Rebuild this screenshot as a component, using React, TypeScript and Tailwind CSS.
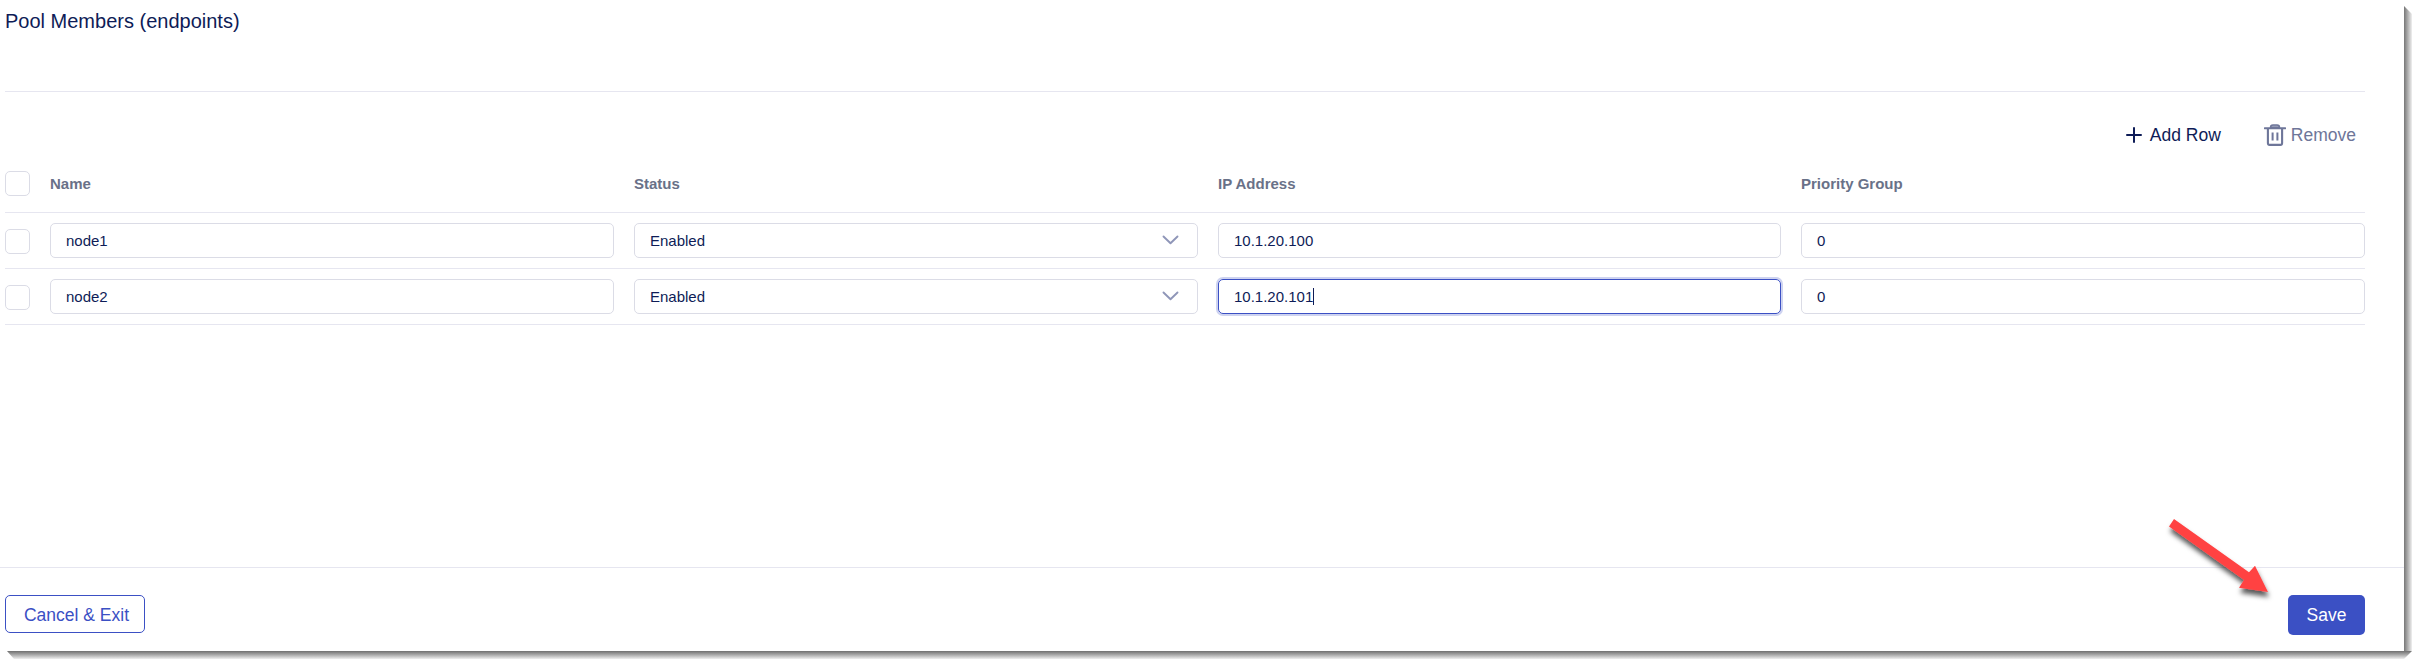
import React from "react";

type Member = { name: string; status: string; ip: string; priority: string; focused?: boolean };

const members: Member[] = [
  { name: "node1", status: "Enabled", ip: "10.1.20.100", priority: "0" },
  { name: "node2", status: "Enabled", ip: "10.1.20.101", priority: "0", focused: true },
];

const columns = ["Name", "Status", "IP Address", "Priority Group"];

function Checkbox() {
  return <span className="block size-[25px] rounded-[5px] border border-[#dbdce6] bg-white" />;
}

function Field({ value, select, focused }: { value: string; select?: boolean; focused?: boolean }) {
  return (
    <div
      className={
        focused
          ? "flex h-[35px] items-center rounded-[5px] border border-[#3b50c4] pl-[15px] shadow-[0_0_0_2px_#ced3f0]"
          : "flex h-[35px] items-center rounded-[5px] border border-[#dbdce6] pl-[15px] pr-[18px]"
      }
    >
      <span className="leading-5">{value}</span>
      {focused && <span className="h-[17px] w-px bg-[#0e1c57]" />}
      {select && (
        <svg className="ml-auto" width="17" height="11" viewBox="0 0 17 11" fill="none">
          <path d="M1.5 1.5L8.5 8.3L15.5 1.5" stroke="#8f96b8" strokeWidth="1.9" strokeLinecap="round" strokeLinejoin="round" />
        </svg>
      )}
    </div>
  );
}

function Arrow() {
  return (
    <svg className="absolute left-[2150px] top-[505px]" width="140" height="110" viewBox="2150 505 140 110">
      <defs>
        <filter id="arrow-shadow" x="-20%" y="-20%" width="150%" height="150%">
          <feDropShadow dx="1" dy="5" stdDeviation="2.5" floodColor="#000" floodOpacity="0.65" />
        </filter>
      </defs>
      <path
        d="M2174 519L2249 572.3L2255 565.7L2268 592L2239 587.7L2244 580L2169 526.5Z"
        fill="#ff4343"
        filter="url(#arrow-shadow)"
      />
    </svg>
  );
}

export default function App() {
  return (
    <div className="relative h-[666px] w-[2419px] overflow-hidden bg-white font-['Liberation_Sans',Arial,sans-serif] text-[#0e1c57]">
      <div className="absolute left-[2404px] top-[6px] h-[653px] w-2 bg-linear-to-r from-[#777777] to-[#f0f0f0] [clip-path:polygon(0_0,100%_8px,100%_645px,0_645px)]" />
      <div className="absolute left-[7px] top-[651px] h-2 w-[2405px] bg-linear-to-b from-[#707070] to-[#f0f0f0] [clip-path:polygon(0_0,2405px_0,2397px_100%,7px_100%)]" />

      <div className="flex h-[651px] w-[2404px] flex-col bg-white">
        <main className="flex flex-1 flex-col pl-[5px] pr-[39px]">
          <header className="h-[92px] border-b border-[#e6e6f0] pt-[9px]">
            <h1 className="text-[20px] leading-6">Pool Members (endpoints)</h1>
          </header>

          <div className="flex h-[63px] items-start justify-end pr-[9px] pt-[32px] text-[17.5px] leading-[22px]">
            <button className="flex items-center gap-2">
              <svg width="16" height="16" viewBox="0 0 16 16" fill="none">
                <path d="M8 1V15M1 8H15" stroke="#0e1c57" strokeWidth="2" strokeLinecap="round" />
              </svg>
              Add Row
            </button>
            <button className="ml-[43px] flex items-center gap-[5px] text-[#6e7699]">
              <svg width="22" height="22" viewBox="0 0 22 22" fill="none" stroke="#6e7699">
                <path d="M6.5 3.5C6.5 1.9 7.6 1 9 1H13C14.4 1 15.5 1.9 15.5 3.5Z" fill="#a3a8c0" strokeWidth="1.5" />
                <path d="M0.8 4.2H21.2" strokeWidth="2" strokeLinecap="round" />
                <path d="M3.9 4.5V19C3.9 20.2 4.5 20.9 5.6 20.9H16.4C17.5 20.9 18.1 20.2 18.1 19V4.5" strokeWidth="2.1" />
                <path d="M8.6 8.5V16.5M13.4 8.5V16.5" strokeWidth="2" />
              </svg>
              Remove
            </button>
          </div>

          <div className="flex h-[58px] items-center border-b border-[#e6e6f0]">
            <div className="w-[45px] shrink-0">
              <Checkbox />
            </div>
            <div className="grid flex-1 grid-cols-[564fr_564fr_563fr_564fr] gap-x-5 text-[15px] font-bold leading-5 text-[#697188]">
              {columns.map((c) => (
                <span key={c}>{c}</span>
              ))}
            </div>
          </div>

          {members.map((m) => (
            <div key={m.name} className="flex h-14 items-center border-b border-[#e6e6f0]">
              <div className="w-[45px] shrink-0 pt-[2px]">
                <Checkbox />
              </div>
              <div className="grid flex-1 grid-cols-[564fr_564fr_563fr_564fr] gap-x-5 text-[15px]">
                <Field value={m.name} />
                <Field value={m.status} select />
                <Field value={m.ip} focused={m.focused} />
                <Field value={m.priority} />
              </div>
            </div>
          ))}
        </main>

        <footer className="flex h-[84px] items-start justify-between border-t border-[#e6e6f0] pl-[5px] pr-[39px] pt-[27px] text-[17.5px]">
          <button className="h-[38px] w-[140px] rounded-[5px] border border-[#3b50c4] pl-[3px] pt-[2px] text-[#3b50c4]">
            Cancel &amp; Exit
          </button>
          <button className="h-10 w-[77px] rounded-[5px] bg-[#3b50c4] text-white">Save</button>
        </footer>
      </div>

      <Arrow />
    </div>
  );
}
